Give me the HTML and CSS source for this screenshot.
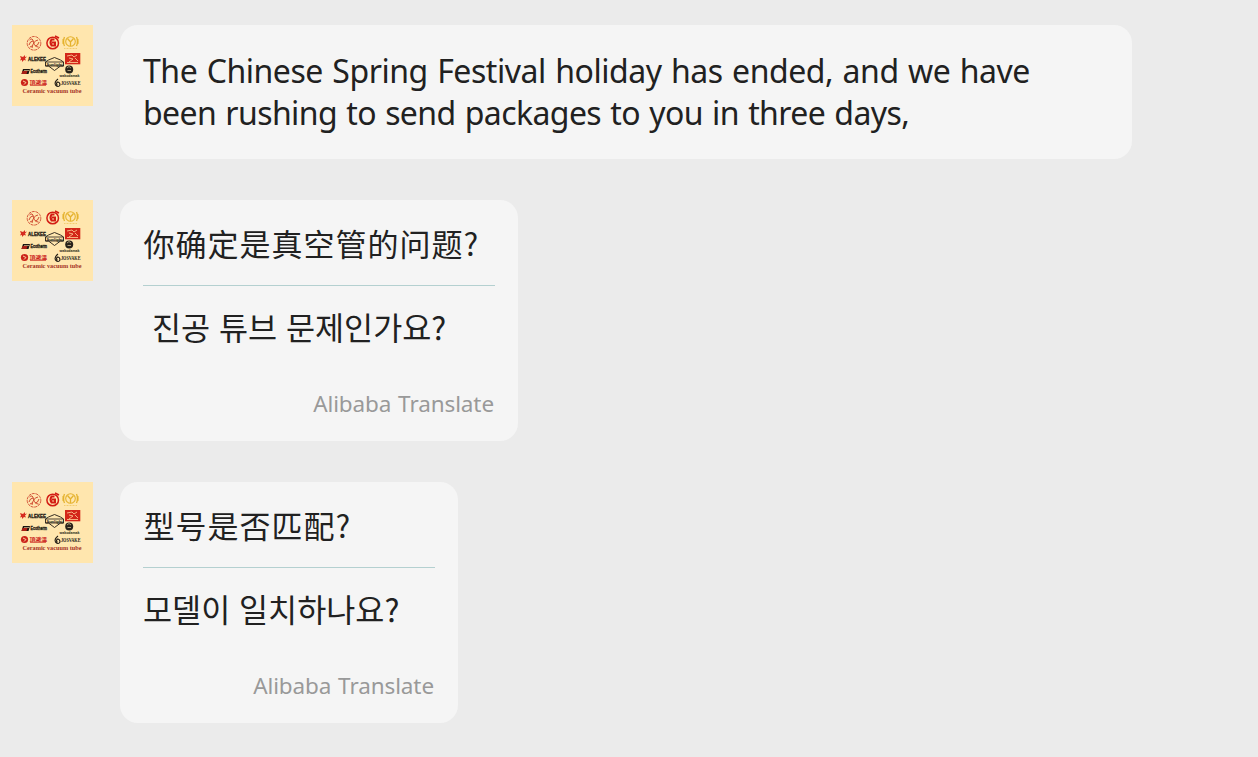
FILE: index.html
```
<!DOCTYPE html>
<html lang="en">
<head>
<meta charset="utf-8">
<title>Chat</title>
<link rel="stylesheet" href="styles.css">
</head>
<body>
<main class="chat">
  <article class="message">
    <svg class="avatar" viewBox="0 0 81 81">
      <g id="shop">
        <rect width="81" height="81" fill="#ffe6ae"/>
        <g fill="none" stroke="#cf4a30">
          <circle cx="22" cy="18.3" r="6.8" stroke-width=".9" stroke-dasharray="3 .7"/>
          <path d="M17.500 15q3-3 4 2t5 5M17 20q1-4 4-4M20 23q1-7 6-8M23 21q3 0 4-4M18 22l2-1" stroke-width="1"/>
          <circle cx="40.7" cy="18" r="5.8" stroke="#d31c14" stroke-width="1.5"/>
          <path d="M42.500 14.500h-3q-2 3 0 6h3.500v-3h-3" stroke="#d31c14" stroke-width="2"/>
          <path d="M43 11l4 2" stroke="#d31c14" stroke-width="1.5"/>
        </g>
        <g fill="none" stroke="#e5b22d">
          <circle cx="58.5" cy="16.5" r="4.8" stroke-width="1.1"/>
          <path d="M55.5 13.5l3 3.5 3-3.5M58.5 17v4M52.5 12q-2 4.500 0 9M64.500 12q2 4.500 0 9" stroke-width="1.3"/>
          <path d="M51 14v5M66 14v5" stroke-width="1"/>
          <path d="M52 23.500h13" stroke-width=".7" stroke-dasharray="1 .5" opacity=".7"/>
        </g>
        <path d="M8 31l3 1 2-2v2l2-.5-2 2 1 2-2-.500-2 2v-2l-2 .5 1-2z" fill="#d62b20"/>
        <text x="16" y="36.300" textLength="18" lengthAdjust="spacingAndGlyphs" class="mark mark-heavy">ALEKEE</text>
        <path d="M33.500 37l3-2 6-2.500 6 2.500 3 2v4h-3l-6 4.500-6-4.500h-3z" fill="#ffe6ae" stroke="#211b14" stroke-width=".9"/>
        <path d="M33.500 37h18M33.500 41h18" stroke="#211b14" stroke-width=".8"/>
        <text x="34.500" y="40.600" textLength="16" lengthAdjust="spacingAndGlyphs" class="mark">Sunlight</text>
        <rect x="53" y="28" width="15.300" height="11.300" fill="#d32619"/>
        <path d="M55 31l5-1 2 2 3-2M57 33l4 1-4 3M63 33l3 3M55 37.500h11" fill="none" stroke="#ffd49b" stroke-width=".8"/>
        <path d="M9.500 49l1.500-5h7l-1.500 5z" fill="#191511"/>
        <path d="M9.500 49l1-3h5l-1 3z" fill="#a81e15"/>
        <path d="M12 45.500h5" stroke="#ffe6ae" stroke-width=".6"/>
        <text x="18.500" y="48.300" textLength="16.500" lengthAdjust="spacingAndGlyphs" class="mark mark-heavy">Ecotherm</text>
        <circle cx="57.200" cy="44.500" r="4" fill="#29231b"/>
        <path d="M55 43l2-1.500 2 1.500M55.500 45.500h3.500" fill="none" stroke="#e7cf9d" stroke-width=".7"/>
        <text x="47.500" y="52.300" textLength="20" lengthAdjust="spacingAndGlyphs" class="mark mark-small">wakodamak</text>
        <circle cx="12.500" cy="57.500" r="3.600" fill="#cb2219"/>
        <path d="M11 56l3 1.500-2 2" fill="none" stroke="#ffe6ae" stroke-width=".9"/>
        <text x="17.500" y="58.500" textLength="17.500" lengthAdjust="spacingAndGlyphs" class="mark mark-cjk">頂鴻溫</text>
        <path d="M18 60.300h16" stroke="#cb2219" stroke-width=".8"/>
        <path d="M46 54q-4 3-2.500 6 3 3 4.500 0 0-3-2.500-3-2 2 0 3" fill="none" stroke="#211b14" stroke-width="1.100"/>
        <text x="49" y="60.300" textLength="19.500" lengthAdjust="spacingAndGlyphs" class="mark mark-serif">JOSVAKE</text>
        <text x="10.500" y="67.500" textLength="59" lengthAdjust="spacingAndGlyphs" class="caption">Ceramic vacuum tube</text>
      </g>
    </svg>
    <div class="bubble bubble-wide">
      <p class="text latin"><span class="line-a">The Chinese Spring Festival holiday has ended, and we have</span><br><span class="line-b">been rushing to send packages to you in three days,</span></p>
    </div>
  </article>
  <article class="message">
    <svg class="avatar" viewBox="0 0 81 81"><use href="#shop"/></svg>
    <div class="bubble bubble-medium">
      <p class="text chinese" lang="zh">你确定是真空管的问题?</p>
      <p class="text korean indented" lang="ko">진공 튜브 문제인가요?</p>
      <p class="credit">Alibaba Translate</p>
    </div>
  </article>
  <article class="message">
    <svg class="avatar" viewBox="0 0 81 81"><use href="#shop"/></svg>
    <div class="bubble bubble-small">
      <p class="text chinese" lang="zh">型号是否匹配?</p>
      <p class="text korean" lang="ko">모델이 일치하나요?</p>
      <p class="credit">Alibaba Translate</p>
    </div>
  </article>
</main>
</body>
</html>
```
FILE: styles.css
```
* { box-sizing: border-box; }
body {
  margin: 0;
  background: #ebebeb;
  color: #212121;
  font-family: "Noto Sans", "Noto Sans CJK SC", sans-serif;
}
.chat {
  display: flex;
  flex-direction: column;
  gap: 41px;
  height: 757px;
  padding: 25px 12px 0;
  overflow: hidden;
}
.message { display: flex; align-items: flex-start; gap: 27px; }
.avatar { flex: none; width: 81px; height: 81px; }
.bubble {
  padding: 0 23px;
  border-radius: 18px;
  background: #f5f5f5;
}
.bubble-wide { width: 1012px; height: 134px; padding-top: 25px; }
.bubble-medium { width: 398px; height: 241px; }
.bubble-small { width: 338px; height: 241px; }
.text { margin: 0; white-space: nowrap; }
.latin { font-size: 32px; line-height: 42px; word-spacing: 1.5px; }
.line-a { letter-spacing: -0.45px; }
.line-b { letter-spacing: -0.6px; }
.chinese {
  height: 86px;
  border-bottom: 1px solid #b4d0d0;
  padding-left: 0.5px;
  font: 31px/86px "Noto Sans CJK SC", sans-serif;
  letter-spacing: 1px;
}
.korean {
  height: 84px;
  font: 31.6px/80px "Noto Sans CJK KR", sans-serif;
}
.indented { padding-left: 9px; }
.credit {
  margin: 0;
  padding-right: 1px;
  color: #999;
  font-size: 22.5px;
  line-height: 67px;
  letter-spacing: -0.1px;
  word-spacing: 1px;
  text-align: right;
  white-space: nowrap;
}
.mark { fill: #211b14; font: bold 4px "Liberation Sans", sans-serif; }
.mark-heavy { font-size: 5px; font-weight: 900; stroke: #211b14; stroke-width: 0.3px; }
.mark-small { font-size: 3.5px; }
.mark-cjk { fill: #cb2219; font: bold 5px "Noto Sans CJK TC", sans-serif; }
.mark-serif { font: bold 6.5px "Liberation Serif", serif; }
.caption { fill: #a53224; font: bold 6px "Liberation Serif", serif; }
```
